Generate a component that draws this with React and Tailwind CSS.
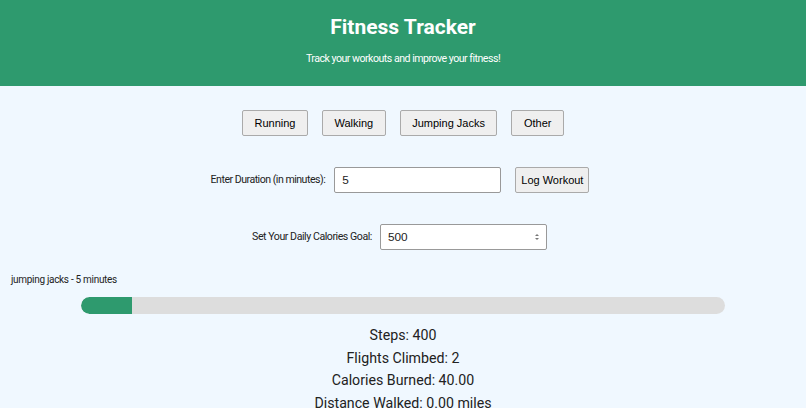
import React from "react";

export default function App() {
  const btnBase =
    "h-[26px] bg-[#efefef] border border-[#aaaaaa] rounded-[2px] text-[11px] text-black font-['Liberation_Sans',Arial,sans-serif]";
  const btn = btnBase + " px-[11.5px]";
  return (
    <div className="min-h-[408px] bg-[#f0f8ff] font-['Roboto',sans-serif] text-[#222]">
      <header className="bg-[#2e9a6e] text-white text-center pt-[14px] pb-[20px]">
        <h1 className="text-[21px] font-bold leading-[26px]">Fitness Tracker</h1>
        <p className="mt-[12px] text-[10.6px] leading-[14px] tracking-[-0.5px]">
          Track your workouts and improve your fitness!
        </p>
      </header>

      <div className="flex justify-center gap-[14px] mt-[24px]">
        <button className={btn}>Running</button>
        <button className={btn}>Walking</button>
        <button className={btn}>Jumping Jacks</button>
        <button className={btn}>Other</button>
      </div>

      <div className="flex justify-center items-center mt-[31px] pr-[6px]">
        <label className="text-[10.6px] mr-[9px] tracking-[-0.5px]">Enter Duration (in minutes):</label>
        <input
          type="text"
          defaultValue="5"
          className="w-[167px] h-[26px] bg-white border border-[#999] rounded-[2px] px-[7px] text-[11.8px] font-['Liberation_Sans',Arial,sans-serif]"
        />
        <button className={btnBase + " ml-[14px] px-[5px]"}>Log Workout</button>
      </div>

      <div className="flex justify-center items-center mt-[31px] pr-[7px]">
        <label className="text-[10.6px] mr-[8px] tracking-[-0.45px]">Set Your Daily Calories Goal:</label>
        <div className="relative">
          <input
            type="text"
            defaultValue="500"
            className="w-[167px] h-[26px] bg-white border border-[#999] rounded-[2px] px-[7px] text-[11.8px] font-['Liberation_Sans',Arial,sans-serif]"
          />
          <svg
            className="absolute right-[7px] top-[8px]"
            width="6"
            height="10"
            viewBox="0 0 6 10"
          >
            <path d="M1 4 L3 2 L5 4Z" fill="#777" />
            <path d="M1 6 L3 8 L5 6Z" fill="#777" />
          </svg>
        </div>
      </div>

      <div className="px-[11px] mt-[23px]">
        <p className="text-[10px] leading-[14px] tracking-[-0.3px]">jumping jacks - 5 minutes</p>
      </div>

      <div className="w-[80%] mx-auto mt-[10px] h-[17px] bg-[#dddddd] rounded-full overflow-hidden">
        <div className="h-full bg-[#2e9a6e] rounded-l-full" style={{ width: "8%" }} />
      </div>

      <div className="text-center text-[14.2px] leading-[22.5px] mt-[10px]">
        <p>Steps: 400</p>
        <p>Flights Climbed: 2</p>
        <p>Calories Burned: 40.00</p>
        <p>Distance Walked: 0.00 miles</p>
      </div>
    </div>
  );
}
